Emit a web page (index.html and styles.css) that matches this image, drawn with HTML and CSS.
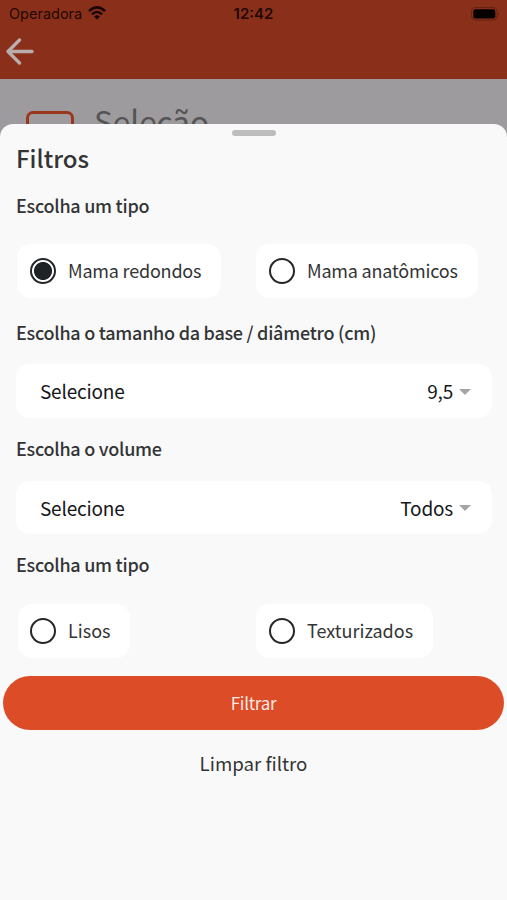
FILE: index.html
```
<!DOCTYPE html>
<html lang="pt">
<head>
<meta charset="utf-8">
<title>Filtros</title>
<link rel="stylesheet" href="styles.css">
</head>
<body>
<header class="topbar">
  <div class="status">
    <div class="carrier"><span>Operadora</span>
      <svg class="wifi" width="18" height="14" viewBox="0 0 18 14"><g fill="none" stroke="#190602" stroke-width="2.5"><path d="M1 5.1Q9-2.3 17 5.1"/><path d="M3.9 8.3Q9 3.6 14.1 8.3"/></g><path d="M6 10.4Q9 7.9 12 10.4L9 13.4Z" fill="#190602"/></svg>
    </div>
    <span class="clock">12:42</span>
    <svg class="battery" width="29" height="14" viewBox="0 0 29 14"><rect x=".6" y=".6" width="25.4" height="12.6" rx="4" fill="none" stroke="#64220f"/><rect x="2.3" y="2.3" width="22" height="9.2" rx="2.2" fill="#050000"/><path d="M27.2 5.4v3q1-.5 1-1.5t-1-1.5" fill="#64220f"/></svg>
  </div>
  <svg class="back" width="28" height="27" viewBox="0 0 28 27"><path d="M13.5 2L2 13.5L13.5 25M2 13.5H26" fill="none" stroke="#b9aeac" stroke-width="3.3" stroke-linecap="round" stroke-linejoin="round"/></svg>
</header>
<section class="backdrop"><span class="frame"></span><span class="heading">Seleção</span></section>
<main class="sheet">
  <div class="handle"></div>
  <h1>Filtros</h1>
  <h2>Escolha um tipo</h2>
  <div class="options">
    <div class="option"><i class="radio checked"></i><span>Mama redondos</span></div>
    <div class="option"><i class="radio"></i><span>Mama anatômicos</span></div>
  </div>
  <h2 class="base">Escolha o tamanho da base / diâmetro (cm)</h2>
  <div class="select"><span>Selecione</span><span class="value">9,5</span><i class="caret"></i></div>
  <h2 class="volume">Escolha o volume</h2>
  <div class="select volume-select"><span>Selecione</span><span class="value">Todos</span><i class="caret"></i></div>
  <h2 class="texture">Escolha um tipo</h2>
  <div class="options">
    <div class="option smooth"><i class="radio"></i><span>Lisos</span></div>
    <div class="option"><i class="radio"></i><span>Texturizados</span></div>
  </div>
  <div class="submit">Filtrar</div>
  <div class="clear">Limpar filtro</div>
</main>
</body>
</html>
```
FILE: styles.css
```
* { box-sizing: border-box; }
body {
  margin: 0;
  height: 900px;
  overflow: hidden;
  background: #9d9b9d;
  font-family: "Noto Sans CJK SC", "Noto Sans", sans-serif;
  color: #333436;
}
span { white-space: nowrap; }
svg { display: block; }
.topbar { height: 79px; background: #8a301a; }
.status {
  display: grid;
  grid-template-columns: 1fr auto 1fr;
  align-items: center;
  height: 28px;
  padding: 0 7px 0 9px;
  font-family: Inter, "Liberation Sans", sans-serif;
  font-size: 14.5px;
  color: #210802;
}
.carrier { display: flex; align-items: center; gap: 6px; }
.carrier span, .clock { margin-top: -2px; }
.wifi { margin-top: -2px; }
.clock { margin-left: -2px; font-weight: 600; font-size: 15px; }
.battery { justify-self: end; margin-top: -1px; }
.back { margin: 10px 0 0 6px; }
.backdrop { display: flex; height: 45px; padding-left: 26px; }
.frame {
  width: 48px;
  height: 40px;
  margin-top: 32px;
  border: 3px solid #9a361e;
  border-radius: 7px;
  flex: none;
}
.heading { margin: 21px 0 0 20px; font-size: 31.5px; line-height: 40px; color: #555356; }
.sheet {
  position: relative;
  height: 776px;
  padding: 6px 16px 0;
  background: #f9f9f9;
  border-radius: 13px 13px 0 0;
}
.handle { width: 44px; height: 6px; margin: 0 auto; border-radius: 3px; background: #bdbdbd; }
h1 { margin: 4px 0 0; font-size: 24px; line-height: 36px; font-weight: 500; }
h2 { margin: 15px 0 0; font-size: 18px; line-height: 28px; font-weight: 500; letter-spacing: -.26px; }
.options { display: grid; grid-template-columns: 239px 1fr; margin-top: 25px; padding-left: 1px; }
.option {
  display: flex;
  align-items: center;
  width: max-content;
  height: 54px;
  gap: 12px;
  padding: 0 20px 0 13px;
  background: #fff;
  border-radius: 14px;
  font-size: 18px;
  letter-spacing: -.2px;
}
.option span { line-height: 28px; margin-top: -3px; }
.smooth, .smooth + .option { letter-spacing: 0; }
.smooth { margin-left: 1px; padding-left: 12px; }
.radio { width: 26px; height: 26px; border: 2px solid #242629; border-radius: 50%; flex: none; }
.checked { background: radial-gradient(circle, #202326 8.6px, #fff 9.4px); }
.base { margin-top: 20px; }
.select {
  display: flex;
  align-items: center;
  height: 54px;
  margin: 18px -1px 0 0;
  padding: 0 21px 0 24px;
  background: #fff;
  border-radius: 14px;
  font-size: 19px;
  letter-spacing: -.2px;
  color: #17181a;
}
.select span { margin-top: -1px; }
.value { margin-left: auto; }
.volume { margin-top: 16px; }
.volume-select { height: 53px; margin-top: 19px; }
.texture { margin-top: 16px; }
.texture + .options { margin-top: 26px; }
.caret {
  margin: 1px 0 0 6px;
  border: 6px solid transparent;
  border-top-color: #a5a5a5;
  border-bottom: 0;
}
.submit {
  height: 54px;
  margin: 18px -13px 0;
  border-radius: 27px;
  background: #dc4c27;
  color: #fbeae5;
  font-size: 17px;
  letter-spacing: -.3px;
  line-height: 53px;
  text-align: center;
}
.clear { margin-top: 19px; font-size: 18.7px; line-height: 28px; text-align: center; }
```
